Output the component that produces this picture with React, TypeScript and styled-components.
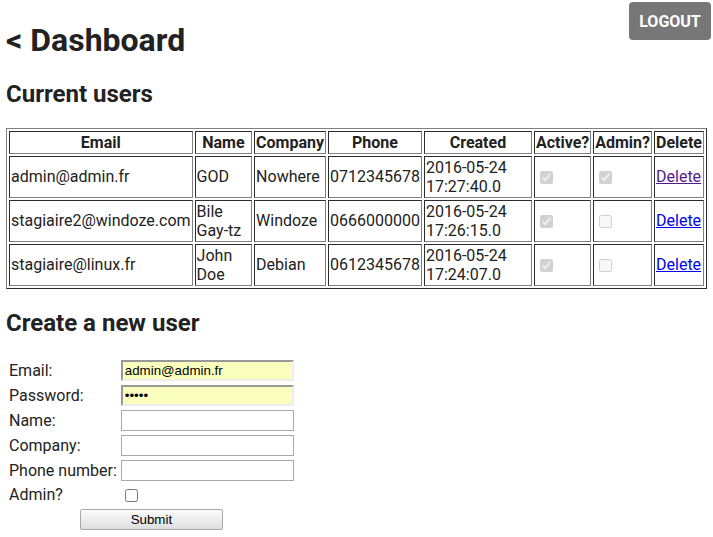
import React from "react";
import styled, { createGlobalStyle } from "styled-components";

const Global = createGlobalStyle`
  body {
    margin: 0 6px 6px;
    font-family: Roboto, "Liberation Sans", sans-serif;
    font-size: 16px;
    color: #222;
    background: #fff;
  }
`;

const Page = styled.div`
  position: relative;
`;

const LogoutButton = styled.button`
  position: fixed;
  top: 2px;
  right: 2px;
  width: 82px;
  height: 38px;
  border: none;
  border-radius: 4px;
  background: #777;
  color: #fff;
  font-family: Roboto, sans-serif;
  font-weight: 700;
  font-size: 16px;
  padding: 0;
  cursor: pointer;
`;

const Title = styled.h1`
  font-size: 32px;
  font-weight: 700;
  margin: 20.5px 0 21.44px;
`;

const Subtitle = styled.h2`
  font-size: 24px;
  font-weight: 700;
  margin: 19.92px 0;
`;

const UsersTable = styled.table`
  width: 100%;
  border: 1px outset gray;
  border-spacing: 2px;
  border-collapse: separate;
`;

const Th = styled.th`
  border: 1px inset gray;
  padding: 1px;
  font-weight: 700;
  text-align: center;
`;

const Td = styled.td`
  border: 1px inset gray;
  padding: 1px;
  vertical-align: middle;
`;

const Check = styled.input.attrs({ type: "checkbox" })`
  width: 13px;
  height: 13px;
  margin: 3px 3px 3px 4px;
  vertical-align: middle;
`;

const DeleteLink = styled.a<{ $visited?: boolean }>`
  color: ${(p) => (p.$visited ? "#551a8b" : "#0000ee")};
  text-decoration: underline;
  cursor: pointer;
`;

const FormTable = styled.table`
  border-spacing: 2px;
  border-collapse: separate;
`;

const FormCell = styled.td<{ $center?: boolean }>`
  padding: 1px;
  vertical-align: middle;
  text-align: ${(p) => (p.$center ? "center" : "left")};
`;

const TextInput = styled.input<{ $filled?: boolean }>`
  box-sizing: border-box;
  width: 173px;
  height: 21px;
  padding: 1px 2px;
  margin: 0;
  font-family: "Liberation Sans", Arial, sans-serif;
  font-size: 13.33px;
  color: #000;
  background: ${(p) => (p.$filled ? "#faffbd" : "#fff")};
  border-style: solid;
  border-width: ${(p) => (p.$filled ? "2px" : "1px")};
  border-color: ${(p) =>
    p.$filled ? "#999 #eee #eee #999" : "#a9a9a9"};
  outline: none;
  display: block;
`;

const SubmitButton = styled.button`
  width: 143px;
  height: 21px;
  margin: 0;
  padding: 0;
  font-family: "Liberation Sans", Arial, sans-serif;
  font-size: 13.33px;
  color: #000;
  border: 1px solid #a9a9a9;
  border-radius: 2px;
  background: linear-gradient(#fcfcfc, #dedede);
  vertical-align: middle;
`;

type User = {
  email: string;
  name: string;
  company: string;
  phone: string;
  date: string;
  time: string;
  active: boolean;
  admin: boolean;
  visited?: boolean;
};

const users: User[] = [
  {
    email: "admin@admin.fr",
    name: "GOD",
    company: "Nowhere",
    phone: "0712345678",
    date: "2016-05-24",
    time: "17:27:40.0",
    active: true,
    admin: true,
    visited: true,
  },
  {
    email: "stagiaire2@windoze.com",
    name: "Bile Gay-tz",
    company: "Windoze",
    phone: "0666000000",
    date: "2016-05-24",
    time: "17:26:15.0",
    active: true,
    admin: false,
  },
  {
    email: "stagiaire@linux.fr",
    name: "John Doe",
    company: "Debian",
    phone: "0612345678",
    date: "2016-05-24",
    time: "17:24:07.0",
    active: true,
    admin: false,
  },
];

export default function App() {
  return (
    <Page>
      <Global />
      <LogoutButton>LOGOUT</LogoutButton>
      <Title>&lt; Dashboard</Title>
      <Subtitle>Current users</Subtitle>
      <UsersTable>
        <thead>
          <tr>
            <Th>Email</Th>
            <Th>Name</Th>
            <Th>Company</Th>
            <Th>Phone</Th>
            <Th>Created</Th>
            <Th>Active?</Th>
            <Th>Admin?</Th>
            <Th>Delete</Th>
          </tr>
        </thead>
        <tbody>
          {users.map((u) => (
            <tr key={u.email}>
              <Td>{u.email}</Td>
              <Td>{u.name}</Td>
              <Td>{u.company}</Td>
              <Td>{u.phone}</Td>
              <Td>
                {u.date} {u.time}
              </Td>
              <Td>
                <Check disabled defaultChecked={u.active} />
              </Td>
              <Td>
                <Check disabled defaultChecked={u.admin} />
              </Td>
              <Td>
                <DeleteLink href="#" $visited={u.visited}>
                  Delete
                </DeleteLink>
              </Td>
            </tr>
          ))}
        </tbody>
      </UsersTable>
      <Subtitle>Create a new user</Subtitle>
      <form onSubmit={(e) => e.preventDefault()}>
        <FormTable>
          <tbody>
            <tr>
              <FormCell>Email:</FormCell>
              <FormCell>
                <TextInput $filled defaultValue="admin@admin.fr" />
              </FormCell>
            </tr>
            <tr>
              <FormCell>Password:</FormCell>
              <FormCell>
                <TextInput $filled type="password" defaultValue="admin" />
              </FormCell>
            </tr>
            <tr>
              <FormCell>Name:</FormCell>
              <FormCell>
                <TextInput />
              </FormCell>
            </tr>
            <tr>
              <FormCell>Company:</FormCell>
              <FormCell>
                <TextInput />
              </FormCell>
            </tr>
            <tr>
              <FormCell>Phone number:</FormCell>
              <FormCell>
                <TextInput />
              </FormCell>
            </tr>
            <tr>
              <FormCell>Admin?</FormCell>
              <FormCell>
                <Check />
              </FormCell>
            </tr>
            <tr>
              <FormCell colSpan={2} $center>
                <SubmitButton type="submit">Submit</SubmitButton>
              </FormCell>
            </tr>
          </tbody>
        </FormTable>
      </form>
    </Page>
  );
}
